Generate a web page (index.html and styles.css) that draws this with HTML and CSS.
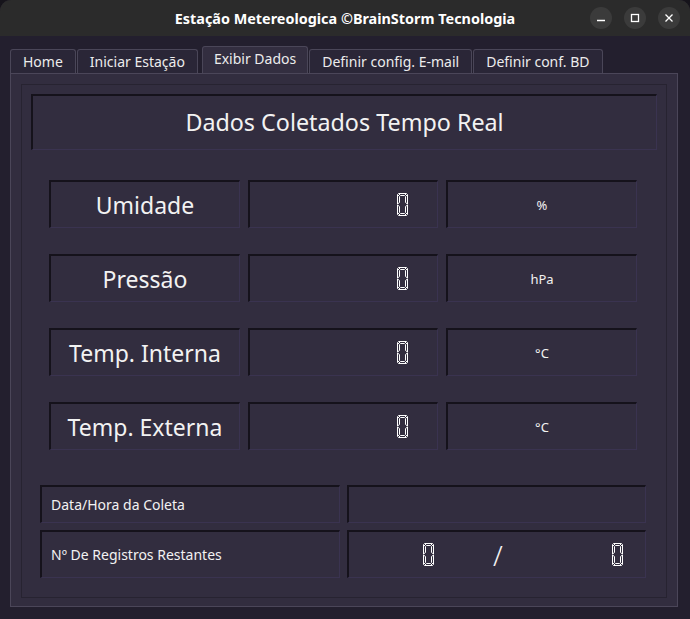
FILE: index.html
```html
<!DOCTYPE html>
<html lang="pt">
<head>
<meta charset="utf-8">
<title>Estação Metereologica</title>
<link rel="stylesheet" href="styles.css">
</head>
<body>
<svg width="0" height="0" class="defs">
  <defs>
    <g id="zero">
      <path d="M1.5 0.5H9.5L7.5 2.5H3.5Z M0.5 1.5L2.5 3.5V9.5L0.5 11Z M10.5 1.5V11L8.5 9.5V3.5Z M0.5 12L2.5 13.5V19.5L0.5 21.5Z M10.5 12V21.5L8.5 19.5V13.5Z M1.5 22.5H9.5L7.5 20.5H3.5Z" fill="none" stroke="#ffffff" stroke-width="1"/>
    </g>
  </defs>
</svg>
<div class="window">
  <header class="titlebar">
    <span class="title">Estação Metereologica ©BrainStorm Tecnologia</span>
    <div class="controls">
      <span class="ctl"><svg width="10" height="10" viewBox="0 0 10 10"><path d="M1 7.5H9" stroke="#fff" stroke-width="1.4"/></svg></span>
      <span class="ctl"><svg width="10" height="10" viewBox="0 0 10 10"><rect x="1.5" y="1.5" width="7" height="7" fill="none" stroke="#fff" stroke-width="1.3"/></svg></span>
      <span class="ctl"><svg width="10" height="10" viewBox="0 0 10 10"><path d="M1.5 1.5L8.5 8.5M8.5 1.5L1.5 8.5" stroke="#fff" stroke-width="1.3"/></svg></span>
    </div>
  </header>
  <main class="main">
    <nav class="tabs">
      <div class="tab">Home</div>
      <div class="tab">Iniciar Estação</div>
      <div class="tab active">Exibir Dados</div>
      <div class="tab">Definir config. E-mail</div>
      <div class="tab">Definir conf. BD</div>
    </nav>
    <section class="panel">
      <div class="frame">
        <div class="sunken header">Dados Coletados Tempo Real</div>
        <div class="grid">
          <div class="sunken label">Umidade</div>
          <div class="sunken value"><svg class="lcd" width="11" height="23" viewBox="0 0 11 23"><use href="#zero"/></svg></div>
          <div class="sunken unit">%</div>

          <div class="sunken label">Pressão</div>
          <div class="sunken value"><svg class="lcd" width="11" height="23" viewBox="0 0 11 23"><use href="#zero"/></svg></div>
          <div class="sunken unit">hPa</div>

          <div class="sunken label">Temp. Interna</div>
          <div class="sunken value"><svg class="lcd" width="11" height="23" viewBox="0 0 11 23"><use href="#zero"/></svg></div>
          <div class="sunken unit">°C</div>

          <div class="sunken label">Temp. Externa</div>
          <div class="sunken value"><svg class="lcd" width="11" height="23" viewBox="0 0 11 23"><use href="#zero"/></svg></div>
          <div class="sunken unit">°C</div>
        </div>
        <div class="bottom">
          <div class="sunken info">Data/Hora da Coleta</div>
          <div class="sunken"></div>
          <div class="sunken info">Nº De Registros Restantes</div>
          <div class="sunken counter">
            <svg class="lcd big first" width="11" height="23" viewBox="0 0 11 23"><use href="#zero"/></svg>
            <span class="slash">/</span>
            <svg class="lcd big last" width="11" height="23" viewBox="0 0 11 23"><use href="#zero"/></svg>
          </div>
        </div>
      </div>
    </section>
  </main>
</div>
</body>
</html>
```
FILE: styles.css
```css
* { box-sizing: border-box; }

html, body {
  margin: 0;
  padding: 0;
  background: #16141b;
}

body {
  width: 690px;
  height: 619px;
  overflow: hidden;
  font-family: "Noto Sans", "Open Sans", sans-serif;
  color: #f2f2f2;
}

.defs { position: absolute; }

.window {
  width: 690px;
  height: 619px;
  display: flex;
  flex-direction: column;
  background: #231f2e;
  border-radius: 11px 11px 0 0;
  overflow: hidden;
}

.titlebar {
  height: 36px;
  flex: none;
  background: #2b2b2b;
  display: grid;
  grid-template-columns: 1fr auto 1fr;
  align-items: center;
}

.title {
  grid-column: 2;
  font-weight: 700;
  font-size: 14.4px;
  color: #ffffff;
}

.controls {
  grid-column: 3;
  justify-self: end;
  display: flex;
  gap: 12px;
  padding-right: 10px;
}

.ctl {
  width: 22px;
  height: 22px;
  border-radius: 50%;
  background: #3b3b3b;
  display: flex;
  align-items: center;
  justify-content: center;
}

.main {
  flex: 1;
  display: flex;
  flex-direction: column;
  padding: 10px 0 0 10px;
}

.tabs {
  display: flex;
  align-items: flex-end;
  gap: 1px;
  height: 27px;
}

.tab {
  height: 24px;
  padding: 0 12px;
  border: 1px solid #4a4658;
  border-bottom: none;
  border-radius: 3px 3px 0 0;
  background: #2a2637;
  font-size: 14px;
  line-height: 23px;
  color: #ececec;
}

.tab.active {
  height: 27px;
  line-height: 24px;
  padding: 0 11px;
  background: #332e40;
  margin: 0 0 0 3px;
}

.panel {
  width: 668px;
  height: 534px;
  border: 1px solid #4b4659;
  background: #322d3f;
  padding: 10px 10px 8px 10px;
}

.frame {
  height: 100%;
  border: 1px solid #272331;
  display: flex;
  flex-direction: column;
}

.sunken {
  border-top: 2px solid #15121b;
  border-left: 2px solid #15121b;
  border-right: 1px solid #3a3350;
  border-bottom: 1px solid #3a3350;
  background: #322d3f;
}

.header {
  margin: 9px 0 0 9px;
  width: 626px;
  height: 56px;
  display: flex;
  align-items: center;
  justify-content: center;
  font-size: 23.3px;
  padding-bottom: 2px;
}

.grid {
  margin: 30px 0 0 27px;
  display: grid;
  grid-template-columns: 191px 190px 191px;
  grid-auto-rows: 48px;
  column-gap: 8px;
  row-gap: 26px;
}

.label {
  display: flex;
  align-items: center;
  justify-content: center;
  font-size: 23px;
}

.value {
  display: flex;
  align-items: center;
  justify-content: flex-end;
  padding-right: 29px;
}

.unit {
  display: flex;
  align-items: center;
  justify-content: center;
  font-size: 13px;
}

.lcd { display: block; }

.bottom {
  margin: 35px 0 0 18px;
  display: grid;
  grid-template-columns: 300px 299px;
  grid-template-rows: 38px 48px;
  gap: 7px;
}

.info {
  display: flex;
  align-items: center;
  padding-left: 9px;
  font-size: 14px;
}

.counter {
  display: flex;
  align-items: center;
}

.counter .first { margin-left: 74px; }

.slash {
  margin-left: 59px;
  font-size: 28px;
  line-height: 1;
  font-weight: 300;
}

.counter .last { margin-left: 109px; }
```
